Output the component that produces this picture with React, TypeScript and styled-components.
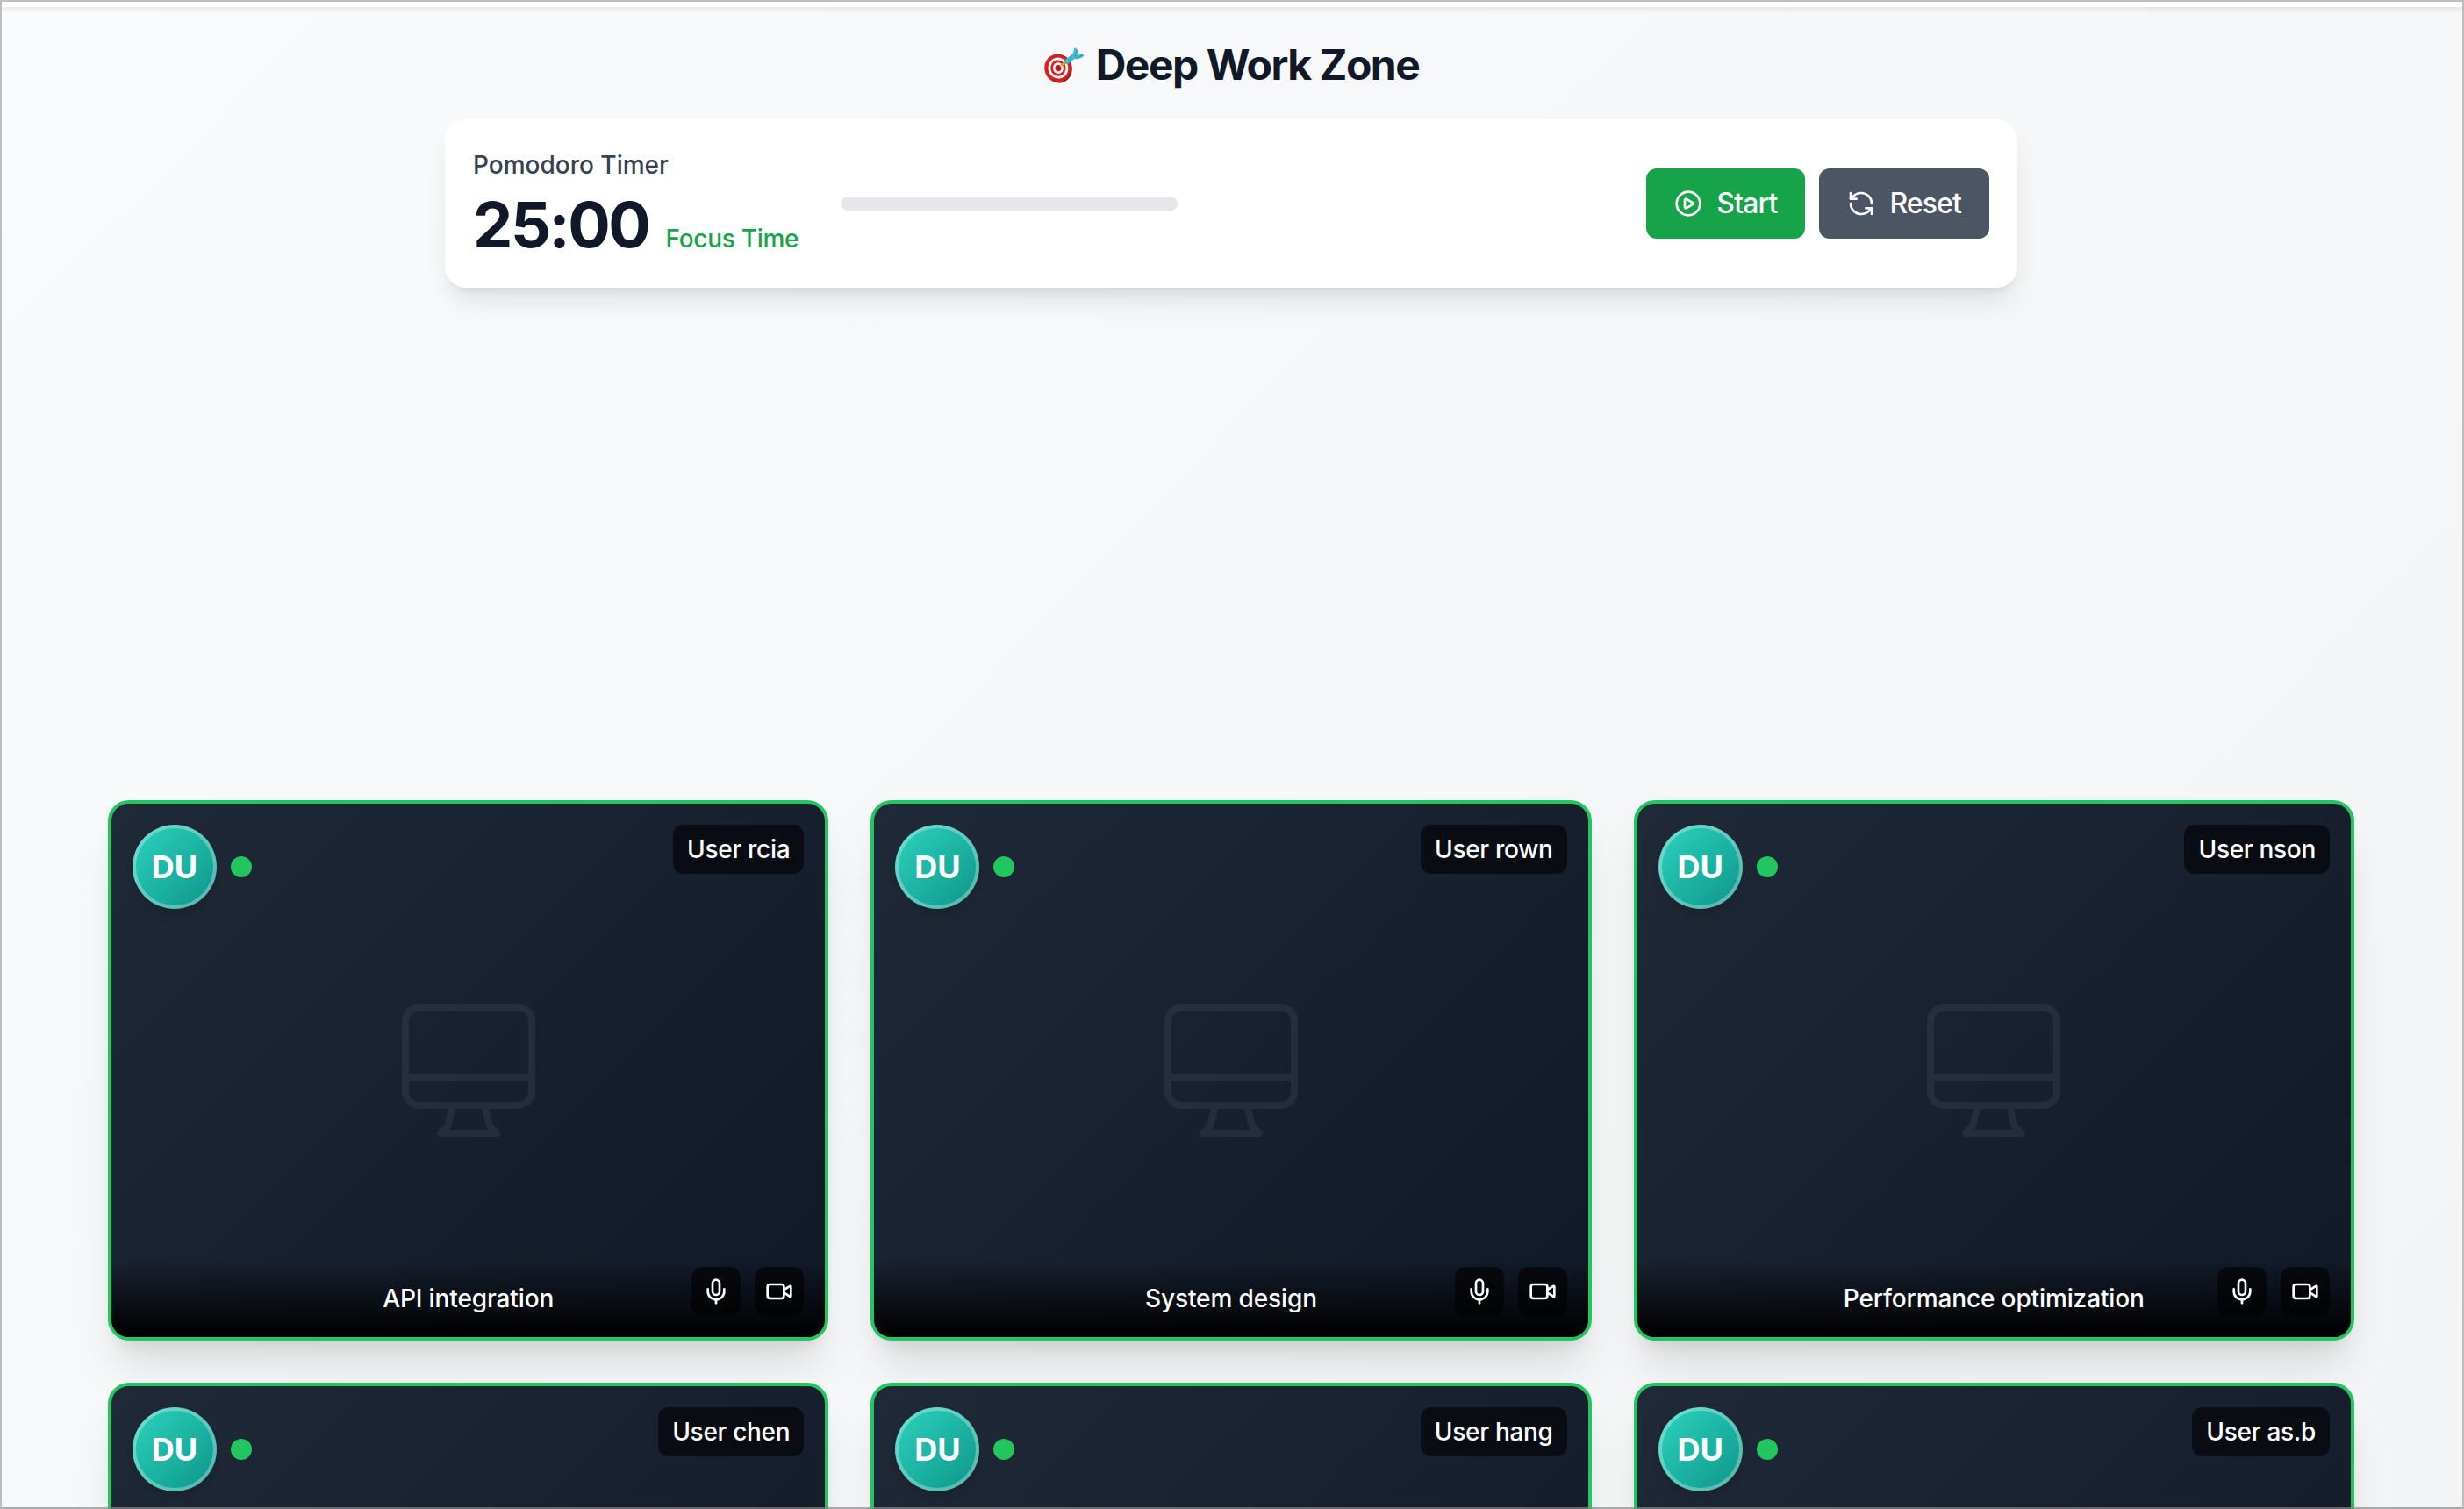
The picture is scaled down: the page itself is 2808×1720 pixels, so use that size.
import React from "react";
import styled, { createGlobalStyle } from "styled-components";
import { CirclePlay, RefreshCcw, Mic, Video } from "lucide-react";

const Global = createGlobalStyle`
  html, body { margin: 0; padding: 0; height: 100%; overflow: hidden; }
  #root { height: 100%; }
  * { box-sizing: border-box; }
`;

const Page = styled.div`
  position: relative;
  height: 1720px;
  overflow: hidden;
  padding: 2px 3px 0 1px;
  font-family: Inter, "Liberation Sans", sans-serif;
  background: linear-gradient(135deg, #f9fafb 0%, #f3f4f6 100%);
  &::after {
    content: "";
    position: absolute;
    inset: 0;
    border: 2px solid #bdbdbd;
    border-bottom-color: rgba(137, 137, 137, 0.71);
    pointer-events: none;
  }
`;

const TopStrip = styled.div`
  height: 6px;
  margin: 0 -3px 0 -1px;
  background: #fff;
  box-shadow: 0 2px 6px rgba(0, 0, 0, 0.1);
`;

const Main = styled.main`
  width: 2560px;
  margin: 0 auto;
  display: flex;
  flex-direction: column;
  align-items: center;
`;

const Title = styled.h1`
  display: flex;
  align-items: center;
  gap: 12px;
  height: 64px;
  margin: 34px 0 0;
  font-size: 48px;
  line-height: 64px;
  font-weight: 700;
  letter-spacing: -1.5px;
  color: #111827;
`;

const TimerCard = styled.section`
  width: 1792px;
  height: 192px;
  margin-top: 30px;
  padding: 0 32px;
  display: flex;
  align-items: center;
  justify-content: space-between;
  background: #fff;
  border-radius: 24px;
  box-shadow: 0 20px 30px -6px rgba(0, 0, 0, 0.1), 0 8px 12px -8px rgba(0, 0, 0, 0.1);
`;

const TimerLeft = styled.div`
  display: flex;
  align-items: center;
  gap: 48px;
`;

const TimerText = styled.div`
  display: flex;
  flex-direction: column;
  gap: 8px;
`;

const TimerLabel = styled.div`
  font-size: 28px;
  line-height: 40px;
  font-weight: 500;
  color: #374151;
`;

const TimerRow = styled.div`
  display: flex;
  align-items: baseline;
  gap: 19px;
`;

const TimerValue = styled.span`
  font-size: 72px;
  line-height: 80px;
  font-weight: 700;
  letter-spacing: -2.4px;
  color: #111827;
`;

const TimerMode = styled.span`
  font-size: 28px;
  line-height: 40px;
  font-weight: 500;
  letter-spacing: -0.3px;
  color: #16a34a;
`;

const Progress = styled.div`
  width: 384px;
  height: 16px;
  border-radius: 8px;
  background: #e5e7eb;
`;

const Buttons = styled.div`
  display: flex;
  gap: 16px;
`;

const ActionButton = styled.button<{ $bg: string }>`
  display: flex;
  align-items: center;
  gap: 16px;
  height: 80px;
  padding: 0 32px;
  border: 0;
  border-radius: 12px;
  background: ${(p) => p.$bg};
  color: #fff;
  font: 500 32px/48px Inter, "Liberation Sans", sans-serif;
  letter-spacing: -0.9px;
`;

const Grid = styled.div`
  width: 100%;
  margin-top: 584px;
  display: grid;
  grid-template-columns: repeat(3, 1fr);
  gap: 48px;
`;

const Card = styled.article`
  position: relative;
  height: 616px;
  border: 4px solid #22c55e;
  border-radius: 24px;
  overflow: hidden;
  display: flex;
  align-items: center;
  justify-content: center;
  background: linear-gradient(135deg, #1f2937 0%, #111827 100%);
`;

const CardShadow = styled.div`
  border-radius: 24px;
  box-shadow: 0 40px 50px -10px rgba(0, 0, 0, 0.1), 0 16px 20px -12px rgba(0, 0, 0, 0.1);
`;

const TopLeft = styled.div`
  position: absolute;
  top: 24px;
  left: 24px;
  display: flex;
  align-items: center;
  gap: 16px;
`;

const Avatar = styled.div`
  width: 96px;
  height: 96px;
  border-radius: 50%;
  border: 4px solid rgba(255, 255, 255, 0.3);
  background: linear-gradient(135deg, #2dd4bf 0%, #0d9488 100%);
  background-origin: border-box;
  box-shadow: 0 8px 12px -2px rgba(0, 0, 0, 0.1);
  display: flex;
  align-items: center;
  justify-content: center;
  color: #fff;
  font-size: 36px;
  font-weight: 700;
`;

const Dot = styled.span`
  width: 24px;
  height: 24px;
  border-radius: 50%;
  background: #22c55e;
`;

const NameBadge = styled.div`
  position: absolute;
  top: 24px;
  right: 24px;
  height: 56px;
  padding: 8px 16px;
  border-radius: 12px;
  background: rgba(0, 0, 0, 0.6);
  color: #fff;
  font-size: 28px;
  line-height: 40px;
  font-weight: 500;
  letter-spacing: -0.3px;
`;

const Placeholder = styled.svg`
  width: 192px;
  height: 192px;
  color: #374151;
  opacity: 0.42;
`;

const Footer = styled.div`
  position: absolute;
  left: 0;
  right: 0;
  bottom: 0;
  padding: 24px;
  background: linear-gradient(to top, #000 0%, rgba(0, 0, 0, 0) 100%);
  color: #fff;
  font-size: 28px;
  line-height: 40px;
  font-weight: 500;
  letter-spacing: -0.12px;
  text-align: center;
`;

const Controls = styled.div`
  position: absolute;
  right: 24px;
  bottom: 24px;
  display: flex;
  gap: 16px;
`;

const ControlButton = styled.button`
  width: 56px;
  height: 56px;
  padding: 0;
  border: 0;
  border-radius: 12px;
  background: rgba(0, 0, 0, 0.6);
  color: #fff;
  display: flex;
  align-items: center;
  justify-content: center;
`;

const Target = () => (
  <svg width="48" height="41" viewBox="0 0 48 41" aria-hidden>
    <g transform="rotate(-12 17 24)">
      <ellipse cx="17.3" cy="24.2" rx="15.4" ry="16.4" fill="#8e0f12" />
      <ellipse cx="16.4" cy="23.6" rx="15" ry="16" fill="#d81e1e" />
      <ellipse cx="17" cy="23.6" rx="11.4" ry="12" fill="#fff" />
      <ellipse cx="17" cy="23.6" rx="8.6" ry="9.2" fill="#d81e1e" />
      <ellipse cx="17" cy="23.6" rx="6" ry="6.4" fill="#fff" />
      <ellipse cx="17" cy="23.6" rx="3.4" ry="3.6" fill="#c5161a" />
    </g>
    <path d="M21 20 L26 17" stroke="#e8a41c" strokeWidth="3" strokeLinecap="round" />
    <path d="M27 16 L36 9" stroke="#3fb6c9" strokeWidth="6" strokeLinecap="round" />
    <path d="M33 11 L35 1 C38 0 40 3 39 7 L46 8 C47 11 41 14 36 13 Z" fill="#4bbccd" />
    <path d="M36 11 L38 3 M37 12 L45 9" stroke="#2d93a8" strokeWidth="1" />
  </svg>
);

const Monitor = () => (
  <Placeholder viewBox="0 0 24 24" fill="none" stroke="currentColor" strokeWidth="1" strokeLinecap="round" strokeLinejoin="round">
    <path d="M9.75 17L9 20l-1 1h8l-1-1-.75-3M3 13h18M5 17h14a2 2 0 002-2V5a2 2 0 00-2-2H5a2 2 0 00-2 2v10a2 2 0 002 2z" />
  </Placeholder>
);

const participants = [
  { name: "User rcia", task: "API integration" },
  { name: "User rown", task: "System design" },
  { name: "User nson", task: "Performance optimization" },
  { name: "User chen" },
  { name: "User hang" },
  { name: "User as.b" },
];

export default function App() {
  return (
    <Page>
      <Global />
      <TopStrip />
      <Main>
        <Title>
          <Target />
          Deep Work Zone
        </Title>
        <TimerCard>
          <TimerLeft>
            <TimerText>
              <TimerLabel>Pomodoro Timer</TimerLabel>
              <TimerRow>
                <TimerValue>25:00</TimerValue>
                <TimerMode>Focus Time</TimerMode>
              </TimerRow>
            </TimerText>
            <Progress />
          </TimerLeft>
          <Buttons>
            <ActionButton $bg="#16a34a">
              <CirclePlay size={32} />
              Start
            </ActionButton>
            <ActionButton $bg="#4b5563">
              <RefreshCcw size={32} />
              Reset
            </ActionButton>
          </Buttons>
        </TimerCard>
        <Grid>
          {participants.map((p) => (
            <CardShadow key={p.name}>
              <Card>
                <Monitor />
                <TopLeft>
                  <Avatar>DU</Avatar>
                  <Dot />
                </TopLeft>
                <NameBadge>{p.name}</NameBadge>
                {p.task && <Footer>{p.task}</Footer>}
                <Controls>
                  <ControlButton aria-label="Microphone">
                    <Mic size={32} />
                  </ControlButton>
                  <ControlButton aria-label="Camera">
                    <Video size={32} />
                  </ControlButton>
                </Controls>
              </Card>
            </CardShadow>
          ))}
        </Grid>
      </Main>
    </Page>
  );
}
